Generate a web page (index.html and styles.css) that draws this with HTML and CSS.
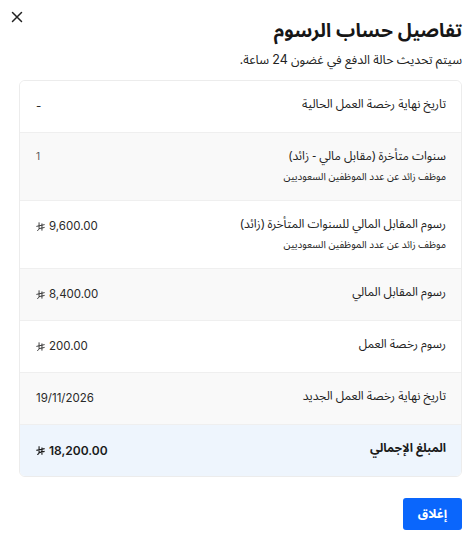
FILE: index.html
```html
<!DOCTYPE html>
<html lang="ar" dir="rtl">
<head>
<meta charset="utf-8">
<title>تفاصيل حساب الرسوم</title>
<link rel="stylesheet" href="styles.css">
</head>
<body>
<div class="dialog">
  <button class="close" aria-label="إغلاق">
    <svg width="12" height="12" viewBox="0 0 12 12"><path d="M1.5 1.5 L10.5 10.5 M10.5 1.5 L1.5 10.5" stroke="#222" stroke-width="1.5" stroke-linecap="round" fill="none"/></svg>
  </button>
  <h1 class="title">تفاصيل حساب الرسوم</h1>
  <p class="subtitle">سيتم تحديث حالة الدفع في غضون <span class="num">24</span> ساعة.</p>

  <div class="card">
    <div class="row">
      <div class="label"><div class="main">تاريخ نهاية رخصة العمل الحالية</div></div>
      <div class="value" dir="ltr">-</div>
    </div>
    <div class="row alt">
      <div class="label"><div class="main">سنوات متأخرة (مقابل مالي - زائد)</div><div class="sub">موظف زائد عن عدد الموظفين السعوديين</div></div>
      <div class="value small" dir="ltr">1</div>
    </div>
    <div class="row">
      <div class="label"><div class="main">رسوم المقابل المالي للسنوات المتأخرة (زائد)</div><div class="sub">موظف زائد عن عدد الموظفين السعوديين</div></div>
      <div class="value" dir="ltr"><svg class="sar" viewBox="0 0 10 10"><path d="M3.4 0.4 V7.2 Q3.4 8.9 1.4 9.6 M6.6 1.6 V9.6 M0.4 4.9 L9.6 2.9 M3.4 7.4 L9.6 6" stroke="currentColor" stroke-width="1" fill="none"/></svg>9,600.00</div>
    </div>
    <div class="row alt">
      <div class="label"><div class="main">رسوم المقابل المالي</div></div>
      <div class="value" dir="ltr"><svg class="sar" viewBox="0 0 10 10"><path d="M3.4 0.4 V7.2 Q3.4 8.9 1.4 9.6 M6.6 1.6 V9.6 M0.4 4.9 L9.6 2.9 M3.4 7.4 L9.6 6" stroke="currentColor" stroke-width="1" fill="none"/></svg>8,400.00</div>
    </div>
    <div class="row">
      <div class="label"><div class="main">رسوم رخصة العمل</div></div>
      <div class="value" dir="ltr"><svg class="sar" viewBox="0 0 10 10"><path d="M3.4 0.4 V7.2 Q3.4 8.9 1.4 9.6 M6.6 1.6 V9.6 M0.4 4.9 L9.6 2.9 M3.4 7.4 L9.6 6" stroke="currentColor" stroke-width="1" fill="none"/></svg>200.00</div>
    </div>
    <div class="row alt">
      <div class="label"><div class="main">تاريخ نهاية رخصة العمل الجديد</div></div>
      <div class="value" dir="ltr">19/11/2026</div>
    </div>
    <div class="row total">
      <div class="label"><div class="main">المبلغ الإجمالي</div></div>
      <div class="value" dir="ltr"><svg class="sar" viewBox="0 0 10 10"><path d="M3.4 0.4 V7.2 Q3.4 8.9 1.4 9.6 M6.6 1.6 V9.6 M0.4 4.9 L9.6 2.9 M3.4 7.4 L9.6 6" stroke="currentColor" stroke-width="1.25" fill="none"/></svg>18,200.00</div>
    </div>
  </div>

  <div class="footer">
    <button class="btn-primary">إغلاق</button>
  </div>
</div>
</body>
</html>
```

FILE: styles.css
```css
* { box-sizing: border-box; }
html, body {
  margin: 0;
  background: #fff;
}
body {
  font-family: Inter, "Noto Sans Arabic", "DejaVu Sans", sans-serif;
  color: #1f1f1f;
}
.dialog {
  position: relative;
  direction: rtl;
  padding: 19px 11px 11px 19px;
}
.close {
  position: absolute;
  top: 11px;
  left: 11px;
  width: 12px;
  height: 12px;
  padding: 0;
  border: 0;
  background: none;
  display: flex;
}
.title,
.subtitle,
.label,
.btn-primary {
  font-family: "Noto Sans Arabic", "DejaVu Sans", Inter, sans-serif;
}
.num {
  font-family: Inter, sans-serif;
}
.title {
  margin: 0;
  height: 24px;
  font-size: 19px;
  line-height: 24px;
  font-weight: 700;
  color: #161616;
}
.subtitle {
  margin: 8px 0 0;
  height: 18px;
  font-size: 12.5px;
  line-height: 18px;
  color: #222;
}
.card {
  margin-top: 11px;
  border: 1px solid #ececec;
  border-radius: 6px;
  overflow: hidden;
}
.row {
  display: flex;
  justify-content: space-between;
  align-items: flex-start;
  padding: 15px 15px 15px 16px;
  border-bottom: 1px solid #efefef;
  background: #fff;
}
.row:last-child { border-bottom: 0; }
.row.alt { background: #f9f9f9; }
.row.total { background: #eef5fd; }
.label {
  color: #222;
}
.main {
  height: 21px;
  font-size: 12px;
  line-height: 18px;
}
.sub {
  height: 16px;
  font-size: 10px;
  line-height: 15px;
  color: #222;
}
.value {
  display: flex;
  align-items: center;
  gap: 4px;
  height: 21px;
  font-size: 11.5px;
  line-height: 21px;
  color: #2a2a2a;
}
.value.small {
  height: 16px;
  font-size: 10px;
  line-height: 16px;
  color: #555;
}
.sar {
  width: 9px;
  height: 9px;
}
.total .label { font-weight: 700; color: #1a1a1a; }
.total .value { font-weight: 600; font-size: 12px; color: #1a1a1a; }
.footer {
  display: flex;
  margin-top: 21px;
}
.btn-primary {
  width: 59px;
  height: 32px;
  border: 0;
  border-radius: 3px;
  background: #0a66fc;
  color: #fff;
  font-size: 12.5px;
  font-weight: 700;
}
```
